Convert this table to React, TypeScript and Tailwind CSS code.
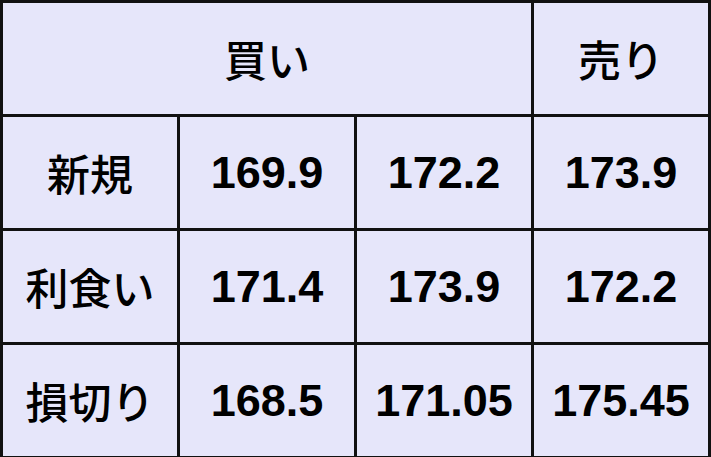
import React from 'react';

const rows: { label: string; values: string[] }[] = [
  { label: '新規', values: ['169.9', '172.2', '173.9'] },
  { label: '利食い', values: ['171.4', '173.9', '172.2'] },
  { label: '損切り', values: ['168.5', '171.05', '175.45'] },
];

const jp = "font-['Noto_Sans_CJK_JP',sans-serif] font-medium text-[43px]";
const num = "font-['Liberation_Sans',Arial,sans-serif] font-bold text-[45px]";
const cell = 'border-[3px] border-[#111] text-center align-middle text-black';

export default function App() {
  return (
    <div className="w-[711px] h-[457px] bg-[#e6e6fa]">
      <table className="w-[711px] h-[457px] table-fixed border-collapse bg-[#e6e6fa]">
        <tbody>
          <tr className="h-[114px]">
            <td colSpan={3} className={`${cell} ${jp}`}>買い</td>
            <td className={`${cell} ${jp}`}>売り</td>
          </tr>
          {rows.map((r) => (
            <tr key={r.label} className="h-[114px]">
              <td className={`${cell} ${jp}`}>{r.label}</td>
              {r.values.map((v, i) => (
                <td key={i} className={`${cell} ${num}`}>{v}</td>
              ))}
            </tr>
          ))}
        </tbody>
      </table>
    </div>
  );
}
